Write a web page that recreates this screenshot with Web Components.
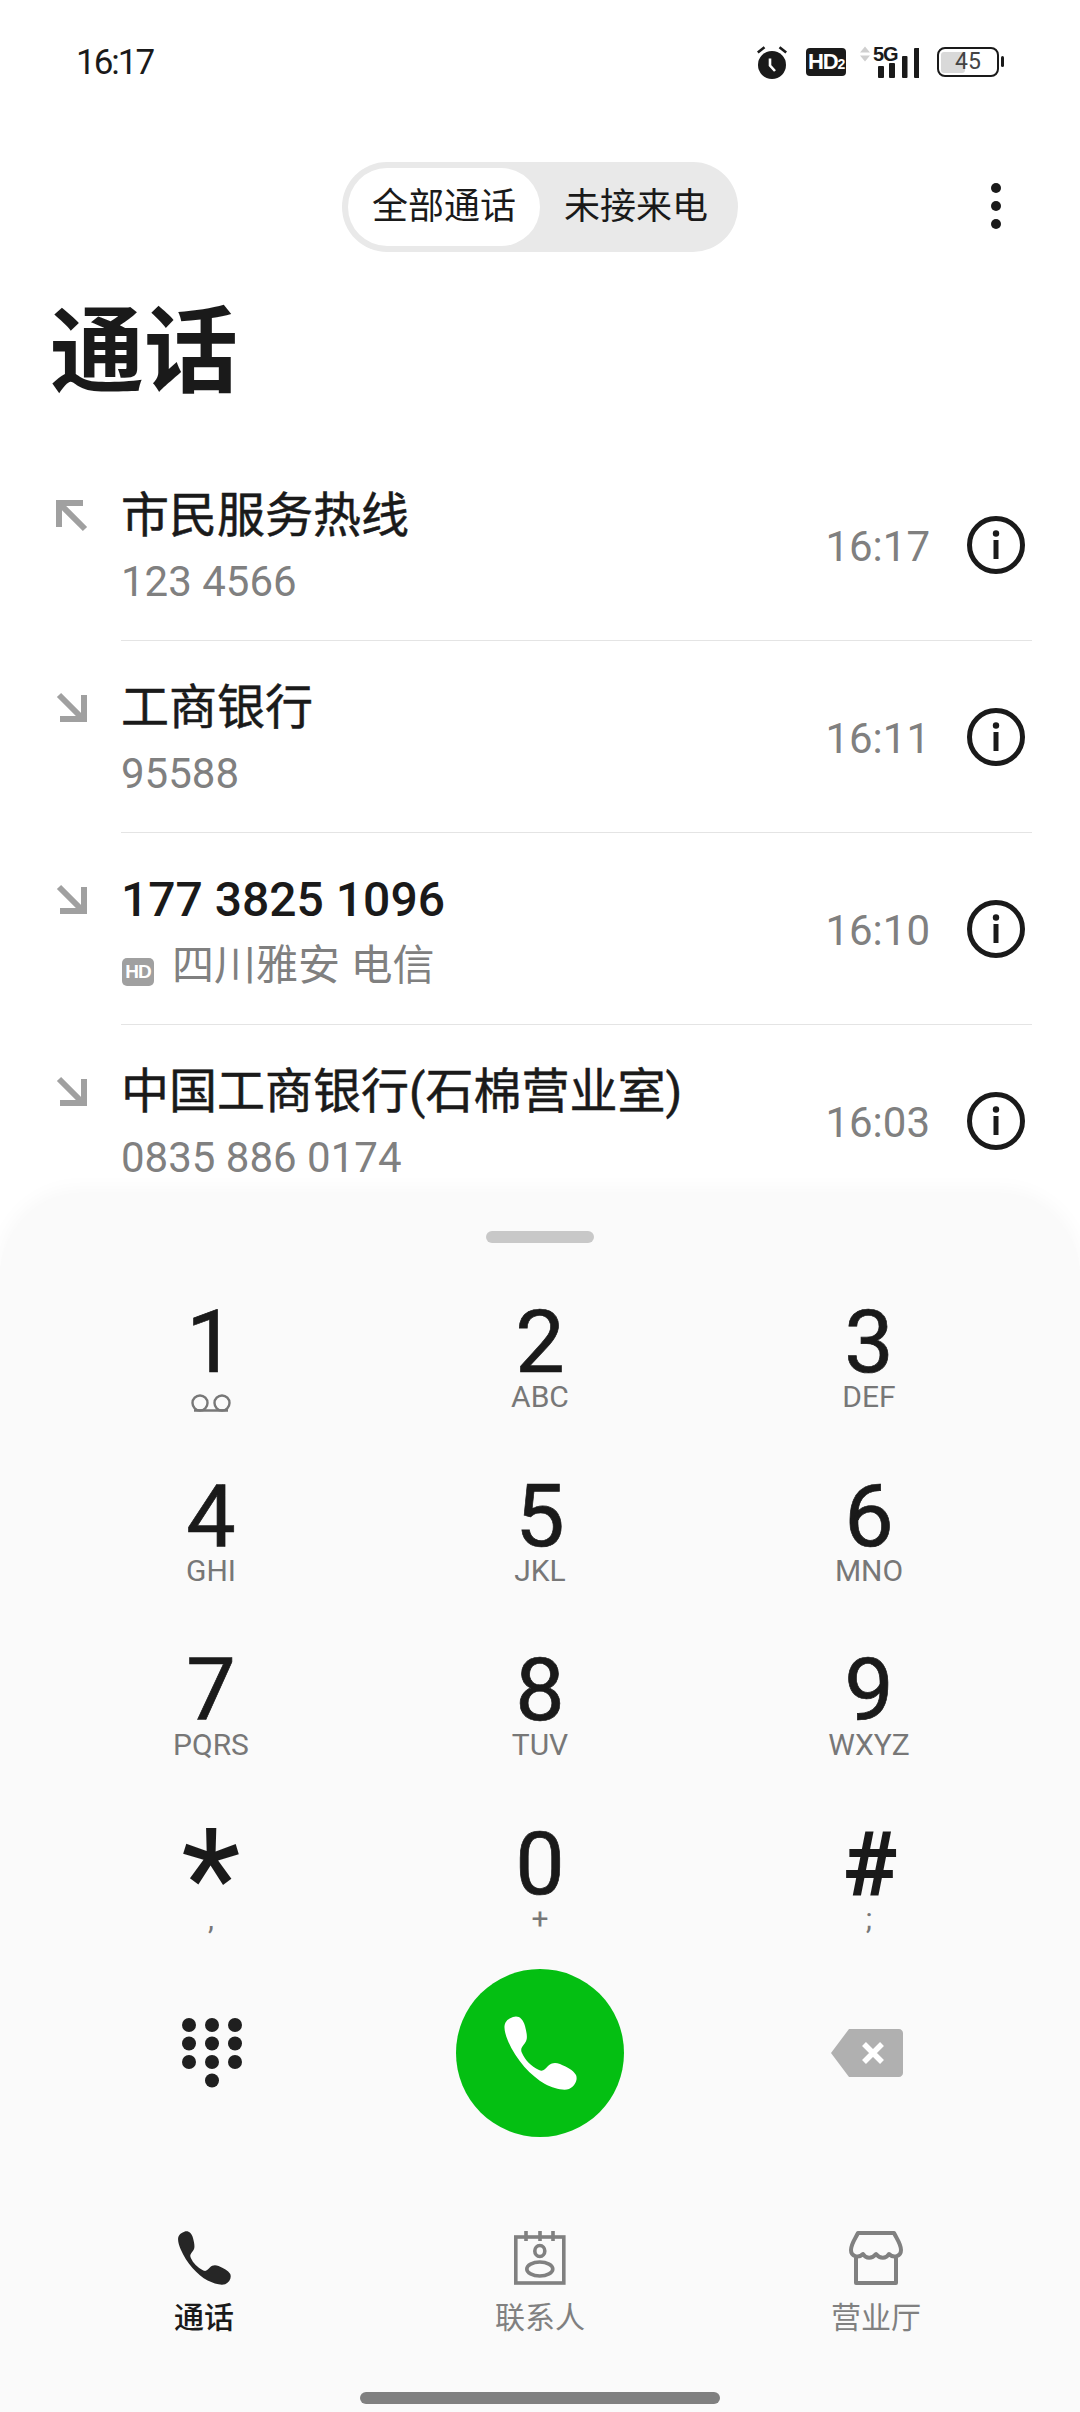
<!DOCTYPE html>
<html lang="zh">
<head>
<meta charset="utf-8">
<title>通话</title>
<style>
  html, body { margin: 0; padding: 0; background: #fff; }
  body {
    width: 1080px;
    height: 2412px;
    overflow: hidden;
    font-family: Roboto, "Noto Sans CJK SC", sans-serif;
    color: #1a1a1a;
  }
</style>
</head>
<body>
<phone-app></phone-app>
<script>
const PHONE_PATH = 'M10 1C15-1 20 2 22 10C24 18 25 23 22 27C19 31 17 33 19 37C22 44 28 50 36 54C40 56 42 53 45 50C48 47 52 46 57 48C64 51 70 54 73 59C75 64 72 70 66 73C60 75 50 72 42 68C28 60 13 44 5 25C1 15-2 5 10 1Z';

class StatusBar extends HTMLElement {
  constructor() {
    super();
    this.attachShadow({ mode: 'open' });
    this.shadowRoot.innerHTML = `
      <style>
        :host { display: flex; justify-content: space-between; align-items: center; height: 124px; padding: 0 81px 0 76px; box-sizing: border-box; }
        .time { font-size: 35px; letter-spacing: -2px; color: #1a1a1a; }
        .icons { display: flex; align-items: center; }
        svg { display: block; }
        .hd { width: 40px; height: 28px; margin-left: 19px; background: #1a1a1a; color: #fff; border-radius: 4px; font: 700 22px/28px "Liberation Sans", sans-serif; letter-spacing: -1.2px; text-align: center; }
        .hd small { font-size: 14px; }
        .signal { position: relative; width: 59px; height: 32px; margin-left: 14px; }
        .signal b { position: absolute; left: 13px; top: 0; font: 700 20px/16px "Liberation Sans", sans-serif; letter-spacing: -1.2px; color: #1a1a1a; }
        .batt { position: relative; width: 62px; height: 30px; margin-left: 18px; box-sizing: border-box; border: 2.5px solid #1a1a1a; border-radius: 8px; }
        .batt i { position: absolute; left: 2px; top: 2.5px; bottom: 2.5px; width: 24px; background: #d9d9d9; border-radius: 3px; }
        .batt span { position: absolute; inset: 0; text-align: center; font-size: 23px; line-height: 25px; color: #444; }
        .batt::after { content: ""; position: absolute; right: -7px; top: 7px; width: 3px; height: 11px; background: #1a1a1a; border-radius: 2px; }
      </style>
      <span class="time">16:17</span>
      <div class="icons">
        <svg width="30" height="33" viewBox="0 0 30 33">
          <circle cx="15" cy="19" r="14" fill="#1a1a1a"/>
          <path d="M0.8 6.5L7.5 1.2M29.2 6.5L22.5 1.2" stroke="#1a1a1a" stroke-width="2.6" fill="none"/>
          <path d="M13 12.5V19.5L18 25" stroke="#fff" stroke-width="2.6" fill="none"/>
        </svg>
        <div class="hd">HD<small>2</small></div>
        <div class="signal">
          <svg width="59" height="32" viewBox="0 0 59 32" style="position:absolute;inset:0">
            <path d="M0 6.5L5 0.5L10 6.5ZM0 9.5H10L5 15.5Z" fill="#cfcfcf"/>
            <rect x="18" y="20" width="6" height="12" rx="1" fill="#1a1a1a"/>
            <rect x="29" y="17" width="6" height="15" rx="1" fill="#1a1a1a"/>
            <rect x="42" y="10" width="5.5" height="22" rx="1" fill="#1a1a1a"/>
            <rect x="54" y="2" width="5.5" height="30" rx="1" fill="#1a1a1a"/>
          </svg>
          <b>5G</b>
        </div>
        <div class="batt"><i></i><span>45</span></div>
      </div>
    `;
  }
}
customElements.define('status-bar', StatusBar);

class CallTabs extends HTMLElement {
  constructor() {
    super();
    this.attachShadow({ mode: 'open' });
    this.shadowRoot.innerHTML = `
      <style>
        :host { display: block; position: relative; height: 90px; margin-top: 38px; }
        .pill { display: flex; width: 396px; height: 90px; margin: 0 auto; padding: 6px; box-sizing: border-box; background: #e9e9e9; border-radius: 45px; }
        .tab { flex: 0 0 192px; font-size: 36px; line-height: 78px; text-align: center; color: #1a1a1a; border-radius: 39px; white-space: nowrap; }
        .tab.active { background: #fff; }
        .tab + .tab { flex: 1; }
        .more { position: absolute; right: 79px; top: 21px; display: flex; flex-direction: column; gap: 8px; }
        .more i { width: 10px; height: 10px; border-radius: 50%; background: #1a1a1a; }
      </style>
      <div class="pill">
        <div class="tab active">全部通话</div>
        <div class="tab">未接来电</div>
      </div>
      <div class="more"><i></i><i></i><i></i></div>
    `;
  }
}
customElements.define('call-tabs', CallTabs);

class CallRow extends HTMLElement {
  constructor() {
    super();
    this.attachShadow({ mode: 'open' });
    const out = this.getAttribute('dir-type') === 'out';
    const arrow = out
      ? 'M3 27V3H27M4 4L29 29'
      : 'M3 3L28 28M28 3V27H4';
    const nameWeight = this.hasAttribute('num') ? 500 : 400;
    this.shadowRoot.innerHTML = `
      <style>
        :host { display: block; height: 192px; }
        .row { display: flex; height: 100%; }
        .arrow { flex: 0 0 121px; box-sizing: border-box; padding: 51px 0 0 56px; }
        .arrow svg { display: block; }
        .body { flex: 1; display: flex; align-items: center; margin-right: 48px; height: 191px; border-bottom: 1px solid #e4e4e4; }
        :host([last]) .body { border-bottom: 0; }
        .text { flex: 1; min-width: 0; margin-top: 6px; }
        .name { font-size: 48px; line-height: 68px; font-weight: ${nameWeight}; -webkit-text-stroke: ${nameWeight === 400 ? '0.5px' : '0'}; color: #1a1a1a; white-space: nowrap; }
        .sub { display: flex; align-items: center; font-size: 42px; line-height: 64px; color: #808080; white-space: nowrap; }
        .time { font-size: 42px; color: #808080; margin: 4px 37px 0 0; }
        .info { margin-right: 7px; display: block; }
      </style>
      <div class="row">
        <div class="arrow">
          <svg width="32" height="32" viewBox="0 0 32 32"><path d="${arrow}" fill="none" stroke="#a0a0a0" stroke-width="6"/></svg>
        </div>
        <div class="body">
          <div class="text">
            <div class="name"><slot name="name"></slot></div>
            <div class="sub"><slot name="sub"></slot></div>
          </div>
          <span class="time">${this.getAttribute('time')}</span>
          <svg class="info" width="58" height="58" viewBox="0 0 58 58">
            <circle cx="29" cy="29" r="26.5" fill="none" stroke="#1a1a1a" stroke-width="5"/>
            <circle cx="29" cy="17.5" r="3.2" fill="#1a1a1a"/>
            <rect x="26.5" y="24" width="5" height="19" fill="#1a1a1a"/>
          </svg>
        </div>
      </div>
    `;
  }
}
customElements.define('call-row', CallRow);

class HdBadge extends HTMLElement {
  constructor() {
    super();
    this.attachShadow({ mode: 'open' });
    this.shadowRoot.innerHTML = `
      <style>
        :host { display: inline-block; width: 32px; height: 28px; margin: 0 18px 0 1px; background: #a0a0a0; border-radius: 5px; color: #fff; font: 700 19px/28px "Liberation Sans", sans-serif; letter-spacing: -1px; text-align: center; vertical-align: 2px; }
      </style>
      HD
    `;
  }
}
customElements.define('hd-badge', HdBadge);

class DialKey extends HTMLElement {
  constructor() {
    super();
    this.attachShadow({ mode: 'open' });
    const digit = this.getAttribute('digit');
    const sub = this.getAttribute('sub') || '';
    const subHtml = sub === 'vm'
      ? `<svg width="44" height="20" viewBox="0 0 44 20" style="margin-top:7px"><circle cx="11" cy="10" r="7.5" fill="none" stroke="#777" stroke-width="2.4"/><circle cx="33" cy="10" r="7.5" fill="none" stroke="#777" stroke-width="2.4"/><path d="M5 17.5H39" stroke="#777" stroke-width="2.4"/></svg>`
      : `<span class="sub">${sub}</span>`;
    this.shadowRoot.innerHTML = `
      <style>
        :host { display: flex; flex-direction: column; align-items: center; height: 174px; }
        .digit { font-size: 88px; line-height: 88px; height: 88px; color: #1a1a1a; -webkit-text-stroke: 0.7px #1a1a1a; }
        .sub { font-size: 30px; line-height: 30px; margin-top: -4px; color: #777; }
        .digit.star { font-size: 138px; -webkit-text-stroke: 0; transform: translateY(15px); }
        .digit.hash { -webkit-text-stroke: 2px #1a1a1a; }
      </style>
      <span class="digit ${digit === '*' ? 'star' : digit === '#' ? 'hash' : ''}">${digit}</span>
      ${subHtml}
    `;
  }
}
customElements.define('dial-key', DialKey);

class DialPad extends HTMLElement {
  constructor() {
    super();
    this.attachShadow({ mode: 'open' });
    const keys = [
      ['1', 'vm'], ['2', 'ABC'], ['3', 'DEF'],
      ['4', 'GHI'], ['5', 'JKL'], ['6', 'MNO'],
      ['7', 'PQRS'], ['8', 'TUV'], ['9', 'WXYZ'],
      ['*', ','], ['0', '+'], ['#', ';'],
    ];
    this.shadowRoot.innerHTML = `
      <style>
        :host { display: block; position: relative; z-index: 2; flex: 1; background: #fafafa; border-radius: 80px 80px 0 0; box-shadow: 0 -6px 20px rgba(0,0,0,0.03); }
        .handle { width: 108px; height: 12px; margin: 0 auto; position: relative; top: 36px; background: #c8c8c8; border-radius: 6px; }
        .grid { display: grid; grid-template-columns: 329px 329px 329px; grid-auto-rows: 174px; justify-content: center; box-sizing: border-box; height: 762px; padding-top: 91px; }
        .actions { display: grid; grid-template-columns: 329px 329px 329px; justify-content: center; align-items: center; height: 168px; }
        .actions > * { justify-self: center; display: block; }
        .call { width: 168px; height: 168px; border-radius: 50%; background: #04bf12; display: flex; align-items: center; justify-content: center; }
        nav { display: grid; grid-template-columns: 336px 336px 336px; justify-content: center; margin-top: 94px; text-align: center; font-size: 30px; color: #808080; }
        nav div { display: flex; flex-direction: column; align-items: center; gap: 16px; }
        nav svg { display: block; }
        nav .on { color: #1a1a1a; font-weight: 500; }
        nav span { line-height: 34px; }
        .bar { width: 360px; height: 12px; margin: 57px auto 0; border-radius: 6px; background: #808080; }
      </style>
      <div class="handle"></div>
      <div class="grid">
        ${keys.map(([d, s]) => `<dial-key digit="${d}" sub="${s}"></dial-key>`).join('')}
      </div>
      <div class="actions">
        <svg width="60" height="76" viewBox="0 0 60 76" fill="#1f1f1f" style="margin:6px 0 0 2px">
          ${[[7,7],[30,7],[53,7],[7,25.5],[30,25.5],[53,25.5],[7,44],[30,44],[53,44],[30,62.5]].map(([x, y]) => `<circle cx="${x}" cy="${y}" r="7"/>`).join('')}
        </svg>
        <div class="call">
          <svg width="74" height="74" viewBox="0 0 74 74"><path d="${PHONE_PATH}" fill="#fff"/></svg>
        </div>
        <svg width="72" height="48" viewBox="0 0 72 48" style="margin-left:-4px">
          <path d="M18 0H68C70 0 72 2 72 4V44C72 46 70 48 68 48H18L0 24Z" fill="#b0b0b0"/>
          <path d="M33 15L51 33M51 15L33 33" stroke="#fff" stroke-width="5.5"/>
        </svg>
      </div>
      <nav>
        <div class="on">
          <svg width="54" height="54" viewBox="0 0 74 74"><path d="${PHONE_PATH}" fill="#262626"/></svg>
          <span>通话</span>
        </div>
        <div>
          <svg width="54" height="54" viewBox="0 0 54 54" fill="none" stroke="#808080" stroke-width="3.6">
            <rect x="2.8" y="6" width="48" height="46"/>
            <path d="M13 0V10M27 0V10M40 0V10"/>
            <ellipse cx="26.8" cy="20" rx="5" ry="5.5"/>
            <ellipse cx="26.8" cy="38" rx="13" ry="7"/>
          </svg>
          <span>联系人</span>
        </div>
        <div>
          <svg width="54" height="54" viewBox="0 0 54 54" fill="none" stroke="#808080" stroke-width="4" stroke-linejoin="round">
            <path d="M9 2H45C48 8 52 13 52 19C52 25 45 28 40 23C37 28 31 28 27 23C23 28 17 28 14 23C9 28 2 25 2 19C2 13 6 8 9 2Z"/>
            <path d="M7 27V52H47V27"/>
          </svg>
          <span>营业厅</span>
        </div>
      </nav>
      <div class="bar"></div>
    `;
  }
}
customElements.define('dial-pad', DialPad);

class PhoneApp extends HTMLElement {
  constructor() {
    super();
    this.attachShadow({ mode: 'open' });
    this.shadowRoot.innerHTML = `
      <style>
        :host { display: flex; flex-direction: column; width: 1080px; height: 2412px; background: #fff; }
        .top { flex: 0 0 1195px; height: 1195px; overflow: hidden; }
        h1 { margin: 54px 0 0 50px; height: 95px; font-size: 94px; line-height: 95px; font-weight: 700; color: #1a1a1a; }
        .list { margin-top: 48px; }
      </style>
      <div class="top">
        <status-bar></status-bar>
        <call-tabs></call-tabs>
        <h1>通话</h1>
        <div class="list">
          <call-row dir-type="out" time="16:17"><span slot="name">市民服务热线</span><span slot="sub">123 4566</span></call-row>
          <call-row dir-type="in" time="16:11"><span slot="name">工商银行</span><span slot="sub">95588</span></call-row>
          <call-row dir-type="in" time="16:10" num><span slot="name">177 3825 1096</span><span slot="sub"><hd-badge></hd-badge>四川雅安 电信</span></call-row>
          <call-row dir-type="in" time="16:03" last><span slot="name">中国工商银行(石棉营业室)</span><span slot="sub">0835 886 0174</span></call-row>
        </div>
      </div>
      <dial-pad></dial-pad>
    `;
  }
}
customElements.define('phone-app', PhoneApp);
</script>
</body>
</html>
